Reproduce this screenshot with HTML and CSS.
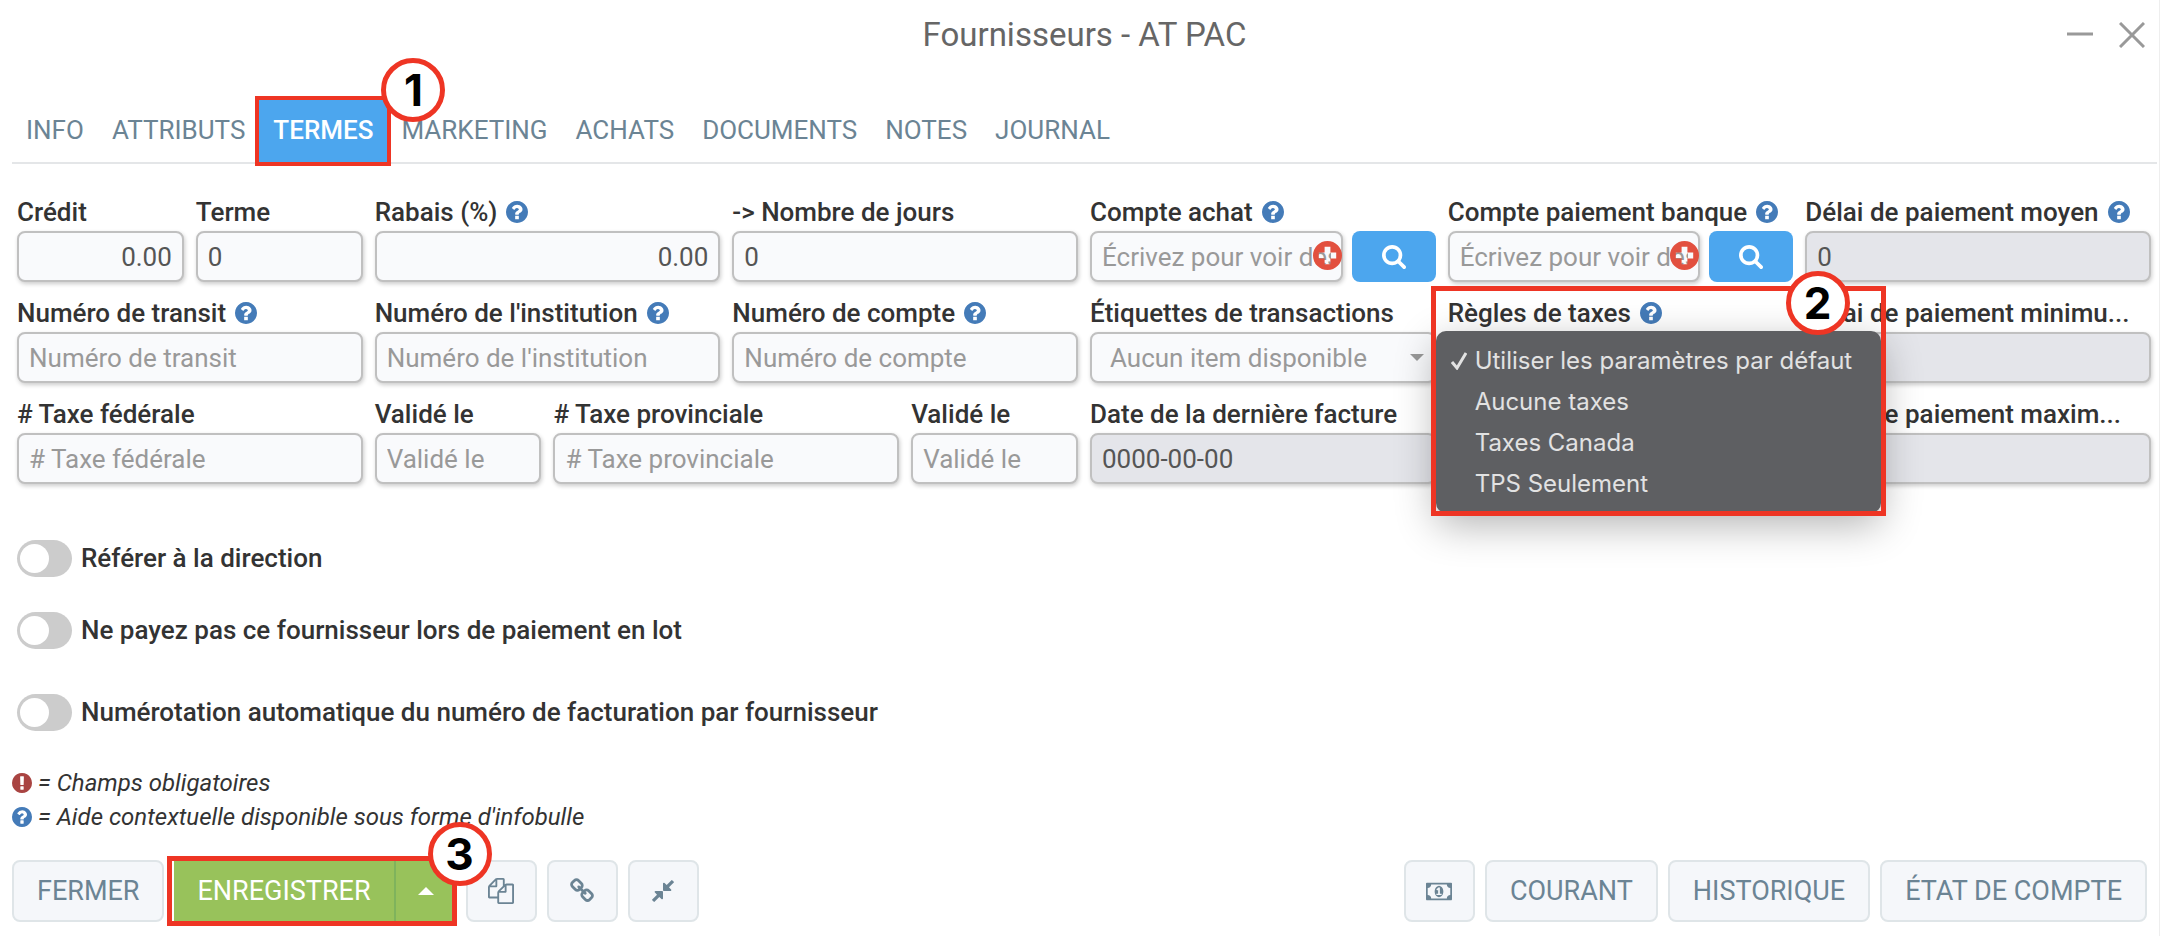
FILE: index.html
```html
<!DOCTYPE html>
<html lang="fr">
<head>
  <meta charset="UTF-8">
  <meta name="viewport" content="width=device-width, initial-scale=1.0">
  <title>Fournisseurs - AT PAC</title>
  <link rel="stylesheet" href="styles.css">
</head>
<body>
  <!-- Icônes partagées -->
  <svg class="sprite" aria-hidden="true">
    <symbol id="help" viewBox="128 128 1536 1536"><path d="M1024 1376v-192q0-14-9-23t-23-9h-192q-14 0-23 9t-9 23v192q0 14 9 23t23 9h192q14 0 23-9t9-23zm256-672q0-88-55.500-163t-138.500-116-170-41q-243 0-371 213-15 24 8 42l132 100q7 6 19 6 16 0 25-12 53-68 86-92 34-24 86-24 48 0 85.500 26t37.500 59q0 38-20 61t-68 45q-63 28-115.500 86.500t-52.500 125.500v36q0 14 9 23t23 9h192q14 0 23-9t9-23q0-19 21.500-49.500t54.500-49.500q32-18 49-28.500t46-35 44.500-48 28-60.500 12.500-81zm384 192q0 209-103 385.500t-279.500 279.500-385.500 103-385.500-103-279.500-279.500-103-385.500 103-385.500 279.500-279.500 385.500-103 385.500 103 279.500 279.500 103 385.500z"/></symbol>
    <symbol id="search" viewBox="64 128 1664 1664"><path d="M1216 832q0-185-131.500-316.500t-316.500-131.500-316.500 131.500-131.500 316.500 131.500 316.500 316.500 131.500 316.500-131.500 131.500-316.500zm512 832q0 52-38 90t-90 38q-54 0-90-38l-343-342q-179 124-399 124-143 0-273.500-55.500t-225-150-150-225-55.500-273.500 55.500-273.500 150-225 225-150 273.500-55.500 273.500 55.500 225 150 150 225 55.500 273.500q0 220-124 399l343 343q37 37 37 90z"/></symbol>
    <symbol id="add" viewBox="0 0 30 30"><path fill-rule="evenodd" d="M15 0a15 15 0 1 1 0 30a15 15 0 1 1 0-30zM12 6v6H6v6h6v6h6v-6h6v-6h-6V6z"/></symbol>
  </svg>

  <main class="window">
    <header class="title-bar">
      <h1>Fournisseurs - AT PAC</h1>
      <div class="window-buttons">
        <button type="button" aria-label="Réduire"><svg viewBox="0 0 26 26"><path d="M0 12h26"/></svg></button>
        <button type="button" aria-label="Fermer la fenêtre"><svg viewBox="0 0 26 26"><path d="M1 1l24 24M25 1L1 25"/></svg></button>
      </div>
    </header>

    <!-- Onglets -->
    <nav class="tabs">
      <a href="#info">INFO</a>
      <a href="#attributs">ATTRIBUTS</a>
      <a href="#termes" class="active">TERMES<span class="step step-tab">1</span></a>
      <a href="#marketing">MARKETING</a>
      <a href="#achats">ACHATS</a>
      <a href="#documents">DOCUMENTS</a>
      <a href="#notes">NOTES</a>
      <a href="#journal">JOURNAL</a>
    </nav>

    <form id="termes">
      <div class="fields">
        <div class="field small">
          <label for="credit">Crédit</label>
          <input type="text" id="credit" class="number" value="0.00">
        </div>
        <div class="field small">
          <label for="terme">Terme</label>
          <input type="text" id="terme" value="0">
        </div>
        <div class="field">
          <label for="rabais">Rabais (%) <svg class="help"><use href="#help"/></svg></label>
          <input type="text" id="rabais" class="number" value="0.00">
        </div>
        <div class="field">
          <label for="jours">-&gt; Nombre de jours</label>
          <input type="text" id="jours" value="0">
        </div>
        <div class="field">
          <label for="achat">Compte achat <svg class="help"><use href="#help"/></svg></label>
          <div class="lookup">
            <div class="lookup-input">
              <input type="text" id="achat" placeholder="Écrivez pour voir des">
              <svg class="add"><use href="#add"/></svg>
            </div>
            <button type="button" class="search" aria-label="Rechercher"><svg><use href="#search"/></svg></button>
          </div>
        </div>
        <div class="field">
          <label for="banque">Compte paiement banque <svg class="help"><use href="#help"/></svg></label>
          <div class="lookup">
            <div class="lookup-input">
              <input type="text" id="banque" placeholder="Écrivez pour voir des">
              <svg class="add"><use href="#add"/></svg>
            </div>
            <button type="button" class="search" aria-label="Rechercher"><svg><use href="#search"/></svg></button>
          </div>
        </div>
        <div class="field">
          <label for="moyen">Délai de paiement moyen <svg class="help"><use href="#help"/></svg></label>
          <input type="text" id="moyen" value="0" readonly>
        </div>

        <div class="field">
          <label for="transit">Numéro de transit <svg class="help"><use href="#help"/></svg></label>
          <input type="text" id="transit" placeholder="Numéro de transit">
        </div>
        <div class="field">
          <label for="institution">Numéro de l'institution <svg class="help"><use href="#help"/></svg></label>
          <input type="text" id="institution" placeholder="Numéro de l'institution">
        </div>
        <div class="field">
          <label for="compte">Numéro de compte <svg class="help"><use href="#help"/></svg></label>
          <input type="text" id="compte" placeholder="Numéro de compte">
        </div>
        <div class="field">
          <label for="etiquettes">Étiquettes de transactions</label>
          <div class="select">
            <select id="etiquettes"><option>Aucun item disponible</option></select>
          </div>
        </div>
        <div class="field tax-rules">
          <label for="regles">Règles de taxes <svg class="help"><use href="#help"/></svg></label>
          <select id="regles"></select>
          <ul class="menu" role="listbox" aria-label="Règles de taxes">
            <li role="option" aria-selected="true"><svg viewBox="0 0 16 18"><path d="M1 10l5 6L15 1"/></svg>Utiliser les paramètres par défaut</li>
            <li role="option">Aucune taxes</li>
            <li role="option">Taxes Canada</li>
            <li role="option">TPS Seulement</li>
          </ul>
          <div class="highlight"><span class="step step-menu">2</span></div>
        </div>
        <div class="field">
          <label for="minimum">Délai de paiement minimu...</label>
          <input type="text" id="minimum" readonly>
        </div>

        <div class="field">
          <label for="federale"># Taxe fédérale</label>
          <input type="text" id="federale" placeholder="# Taxe fédérale">
        </div>
        <div class="field small">
          <label for="valide-fed">Validé le</label>
          <input type="text" id="valide-fed" placeholder="Validé le">
        </div>
        <div class="field">
          <label for="provinciale"># Taxe provinciale</label>
          <input type="text" id="provinciale" placeholder="# Taxe provinciale">
        </div>
        <div class="field small">
          <label for="valide-prov">Validé le</label>
          <input type="text" id="valide-prov" placeholder="Validé le">
        </div>
        <div class="field">
          <label for="facture">Date de la dernière facture</label>
          <input type="text" id="facture" value="0000-00-00" readonly>
        </div>
        <div class="field last">
          <label for="maximum">Délai de paiement maxim...</label>
          <input type="text" id="maximum" readonly>
        </div>
      </div>

      <!-- Options -->
      <div class="toggles">
        <label><input type="checkbox">Référer à la direction</label>
        <label><input type="checkbox">Ne payez pas ce fournisseur lors de paiement en lot</label>
        <label class="spaced"><input type="checkbox">Numérotation automatique du numéro de facturation par fournisseur</label>
      </div>
    </form>

    <div class="legend">
      <p><svg class="required" viewBox="128 128 1536 1536"><path d="M896 128q209 0 385.500 103t279.500 279.500 103 385.500-103 385.500-279.500 279.500-385.500 103-385.500-103-279.500-279.500-103-385.500 103-385.500 279.500-279.500 385.500-103zm128 1247v-190q0-14-9-23.500t-22-9.500h-192q-13 0-23 10t-10 23v190q0 13 10 23t23 10h192q13 0 22-9.500t9-23.500zm-2-344l18-621q0-12-10-18-10-8-24-8h-220q-14 0-24 8-10 6-10 18l17 621q0 10 10 17.500t24 7.500h185q14 0 23.500-7.500t10.500-17.500z"/></svg>= Champs obligatoires</p>
      <p><svg class="help"><use href="#help"/></svg>= Aide contextuelle disponible sous forme d'infobulle</p>
    </div>

    <!-- Actions -->
    <footer>
      <div class="group">
        <button type="button">FERMER</button>
        <div class="save">
          <button type="button">ENREGISTRER</button>
          <button type="button" class="caret" aria-label="Plus d'options"></button>
          <span class="step step-save">3</span>
        </div>
        <button type="button" class="icon" aria-label="Copier"><svg viewBox="0 0 1792 1792"><path d="M1696 384q40 0 68 28t28 68v1216q0 40-28 68t-68 28h-960q-40 0-68-28t-28-68v-288h-544q-40 0-68-28t-28-68v-672q0-40 20-88t48-76l408-408q28-28 76-48t88-20h416q40 0 68 28t28 68v328q68-40 128-40h416zm-544 213l-299 299h299v-299zm-640-384l-299 299h299v-299zm196 647l316-316v-416h-384v416q0 40-28 68t-68 28h-416v640h512v-256q0-40 20-88t48-76zm956 804v-1152h-384v416q0 40-28 68t-68 28h-416v640h896z"/></svg></button>
        <button type="button" class="icon" aria-label="Lier"><svg viewBox="0 0 1792 1792"><path d="M1520 1216q0-40-28-68l-208-208q-28-28-68-28-42 0-72 32 3 3 19 18.500t21.500 21.500 15 19 13 25.500 3.500 27.500q0 40-28 68t-68 28q-15 0-27.500-3.500t-25.500-13-19-15-21.500-21.500-18.500-19q-33 31-33 73 0 40 28 68l206 207q27 27 68 27 40 0 68-26l147-146q28-28 28-67zm-703-705q0-40-28-68l-206-207q-28-28-68-28-39 0-68 27l-147 146q-28 28-28 67 0 40 28 68l208 208q27 27 68 27 42 0 72-31-3-3-19-18.500t-21.500-21.500-15-19-13-25.500-3.500-27.500q0-40 28-68t68-28q15 0 27.500 3.500t25.500 13 19 15 21.500 21.500 18.500 19q33-31 33-73zm895 705q0 120-85 203l-147 146q-83 83-203 83-121 0-204-85l-206-207q-83-83-83-203 0-123 88-209l-88-88q-86 88-208 88-120 0-204-84l-208-208q-84-84-84-204t85-203l147-146q83-83 203-83 121 0 204 85l206 207q83 83 83 203 0 123-88 209l88 88q86-88 208-88 120 0 204 84l208 208q84 84 84 204z"/></svg></button>
        <button type="button" class="icon" aria-label="Fusionner"><svg viewBox="0 0 1792 1792"><path d="M896 960v448q0 26-19 45t-45 19-45-19l-144-144-332 332q-10 10-23 10t-23-10l-114-114q-10-10-10-23t10-23l332-332-144-144q-19-19-19-45t19-45 45-19h448q26 0 45 19t19 45zm755-672q0 13-10 23l-332 332 144 144q19 19 19 45t-19 45-45 19h-448q-26 0-45-19t-19-45v-448q0-26 19-45t45-19 45 19l144 144 332-332q10-10 23-10t23 10l114 114q10 10 10 23z"/></svg></button>
      </div>
      <div class="group">
        <button type="button" class="icon" aria-label="Paiement"><svg class="money" viewBox="0 256 1920 1280"><path d="M768 1152h384v-96h-128v-448h-114l-148 137 77 80q42-37 55-57h2v288h-128v96zm512-256q0 70-21 142t-59.500 134-101.500 101-138 39-138-39-101.500-101-59.500-134-21-142 21-142 59.500-134 101.500-101 138-39 138 39 101.500 101 59.500 134 21 142zm512 256v-512q-106 0-181-75t-75-181h-1152q0 106-75 181t-181 75v512q106 0 181 75t75 181h1152q0-106 75-181t181-75zm128-832v1152q0 26-19 45t-45 19h-1792q-26 0-45-19t-19-45v-1152q0-26 19-45t45-19h1792q26 0 45 19t19 45z"/></svg></button>
        <button type="button">COURANT</button>
        <button type="button">HISTORIQUE</button>
        <button type="button">ÉTAT DE COMPTE</button>
      </div>
    </footer>
  </main>
</body>
</html>
```
FILE: styles.css
```css
* {
  margin: 0;
  padding: 0;
  box-sizing: border-box;
}
body {
  background: #fff;
  color: #333;
  font-family: Roboto, Arial, sans-serif;
  font-size: 26px;
}
input, select, button {
  font: inherit;
  color: #555;
}
button {
  cursor: pointer;
}
.sprite {
  display: none;
}
.window {
  min-height: 100vh;
  border-right: 1px solid #eee;
}

/* Barre de titre */
.title-bar {
  display: grid;
  grid-template-columns: 1fr auto 1fr;
  align-items: center;
  padding-left: 10px;
}
.title-bar h1 {
  grid-column: 2;
  font-size: 33px;
  font-weight: 400;
  line-height: 70px;
  color: #666;
}
.window-buttons {
  display: flex;
  justify-content: flex-end;
  gap: 26px;
  padding-right: 14px;
}
.window-buttons button {
  border: none;
  background: none;
}
.window-buttons svg {
  display: block;
  width: 26px;
  height: 26px;
  fill: none;
  stroke: #999;
  stroke-width: 3;
}

/* Onglets */
.tabs {
  display: flex;
  margin: 28px 2px 0 12px;
  border-bottom: 2px solid #e4e6e8;
}
.tabs a {
  padding: 0 14px;
  line-height: 64px;
  color: #6b8494;
  text-decoration: none;
}
.tabs .active {
  position: relative;
  background: #4ca6ee;
  color: #fff;
  font-weight: 500;
}
.tabs .active::after {
  content: "";
  position: absolute;
  inset: -2px -4px -4px;
  border: 4px solid #ee3524;
}

/* Champs */
.fields {
  display: grid;
  grid-template-columns: repeat(12, minmax(0, 1fr));
  column-gap: 12px;
  padding: 17px 8px 0 17px;
}
.field {
  grid-column: span 2;
}
.field.small {
  grid-column: span 1;
}
.field.last {
  grid-column: 11 / span 2;
}
.field label {
  display: flex;
  align-items: center;
  gap: 9px;
  padding-top: 12px;
  line-height: 38px;
  font-weight: 500;
  white-space: nowrap;
}
.help {
  width: 22px;
  height: 22px;
  fill: #447bb8;
}
.field input, .field select {
  display: block;
  width: 100%;
  height: 51px;
  padding: 0 10px;
  border: 2px solid #c0c0c0;
  border-radius: 8px;
  background: #f9fafc;
  box-shadow: 1px 2px 4px rgba(0, 0, 0, 0.2);
}
.field input::placeholder {
  color: #999;
  opacity: 1;
}
.field input[readonly] {
  background: #e4e5ea;
}
.field input.number {
  text-align: right;
}
.lookup {
  display: flex;
  gap: 9px;
}
.lookup-input {
  position: relative;
  flex: 1;
}
.add {
  position: absolute;
  right: 1px;
  top: 10px;
  width: 29px;
  height: 29px;
  fill: #e2503f;
}
.search {
  display: flex;
  align-items: center;
  justify-content: center;
  width: 84px;
  border: none;
  border-radius: 8px;
  background: #4ca6ee;
}
.search svg {
  width: 24px;
  height: 24px;
  fill: #fff;
}
.select {
  position: relative;
}
.select::after {
  content: "";
  position: absolute;
  right: 12px;
  top: 22px;
  border: 7px solid transparent;
  border-top-color: #999;
  border-bottom: none;
}
.field select {
  appearance: none;
  padding-left: 18px;
  color: #999;
}

/* Liste déroulante des règles de taxes */
.tax-rules {
  position: relative;
}
.menu {
  position: absolute;
  z-index: 1;
  left: -12px;
  top: 49px;
  width: 445px;
  padding: 9px 0;
  border-radius: 10px;
  background: #5e5f62;
  box-shadow: 0 12px 40px rgba(0, 0, 0, 0.3);
  color: #e2e2e2;
  font-family: Inter, sans-serif;
  font-size: 24px;
  list-style: none;
}
.menu li {
  position: relative;
  padding-left: 39px;
  line-height: 41px;
  white-space: nowrap;
}
.menu svg {
  position: absolute;
  left: 15px;
  top: 12px;
  width: 16px;
  height: 18px;
  fill: none;
  stroke: #e2e2e2;
  stroke-width: 3;
}
.highlight {
  position: absolute;
  z-index: 2;
  left: -17px;
  top: 4px;
  width: 455px;
  height: 230px;
  border: 5px solid #ee3524;
}

/* Pastilles numérotées */
.step {
  position: absolute;
  z-index: 3;
  width: 64px;
  height: 64px;
  border: 5px solid #ee3524;
  border-radius: 50%;
  background: #fff;
  color: #000;
  font-family: Inter, sans-serif;
  font-size: 44px;
  font-weight: 700;
  line-height: 54px;
  text-align: center;
}
.step-tab {
  right: -58px;
  top: -40px;
}
.step-menu {
  right: 31px;
  top: -20px;
}
.step-save {
  right: -36px;
  top: -38px;
}

/* Interrupteurs */
.toggles {
  display: flex;
  flex-direction: column;
  align-items: flex-start;
  gap: 35px;
  padding: 56px 17px 0;
}
.toggles label {
  display: flex;
  align-items: center;
  gap: 9px;
  line-height: 37px;
  font-weight: 500;
}
.toggles .spaced {
  margin-top: 10px;
}
.toggles input {
  appearance: none;
  width: 55px;
  height: 37px;
  padding: 4px 3px;
  border-radius: 19px;
  background: #ccc;
}
.toggles input::before {
  content: "";
  display: block;
  width: 29px;
  height: 29px;
  border-radius: 50%;
  background: #fff;
}
.toggles input:checked {
  background: #4ca6ee;
}
.toggles input:checked::before {
  margin-left: auto;
}

.legend {
  padding: 35px 12px 0;
  font-size: 24px;
  font-style: italic;
}
.legend p {
  display: flex;
  align-items: center;
  gap: 6px;
  line-height: 34px;
}
.legend svg {
  width: 20px;
  height: 20px;
}
.required {
  fill: #a94442;
}

/* Boutons du bas */
footer {
  display: flex;
  justify-content: space-between;
  padding: 26px 12px 0;
}
.group {
  display: flex;
  gap: 10px;
}
footer button {
  height: 62px;
  padding: 0 23px;
  border: 2px solid #dfe5e8;
  border-radius: 8px;
  background: #f5f7fa;
  color: #6b8494;
  font-size: 27px;
}
footer .icon {
  display: flex;
  align-items: center;
  justify-content: center;
  width: 71px;
  padding: 0;
}
.icon svg {
  width: 26px;
  height: 26px;
  fill: #6b8494;
}
.icon .money {
  height: 19px;
}
.save {
  position: relative;
  display: flex;
}
.save::after {
  content: "";
  position: absolute;
  inset: -4px -1px -4px -7px;
  border: 5px solid #ee3524;
}
.save button {
  border: none;
  border-radius: 0;
  background: #98c25b;
  color: #fff;
}
.save .caret {
  padding: 0 22px;
  border-left: 2px solid #7fb35c;
}
.caret::before {
  content: "";
  display: block;
  border: 8px solid transparent;
  border-bottom-color: #fff;
  border-top: none;
}
```
